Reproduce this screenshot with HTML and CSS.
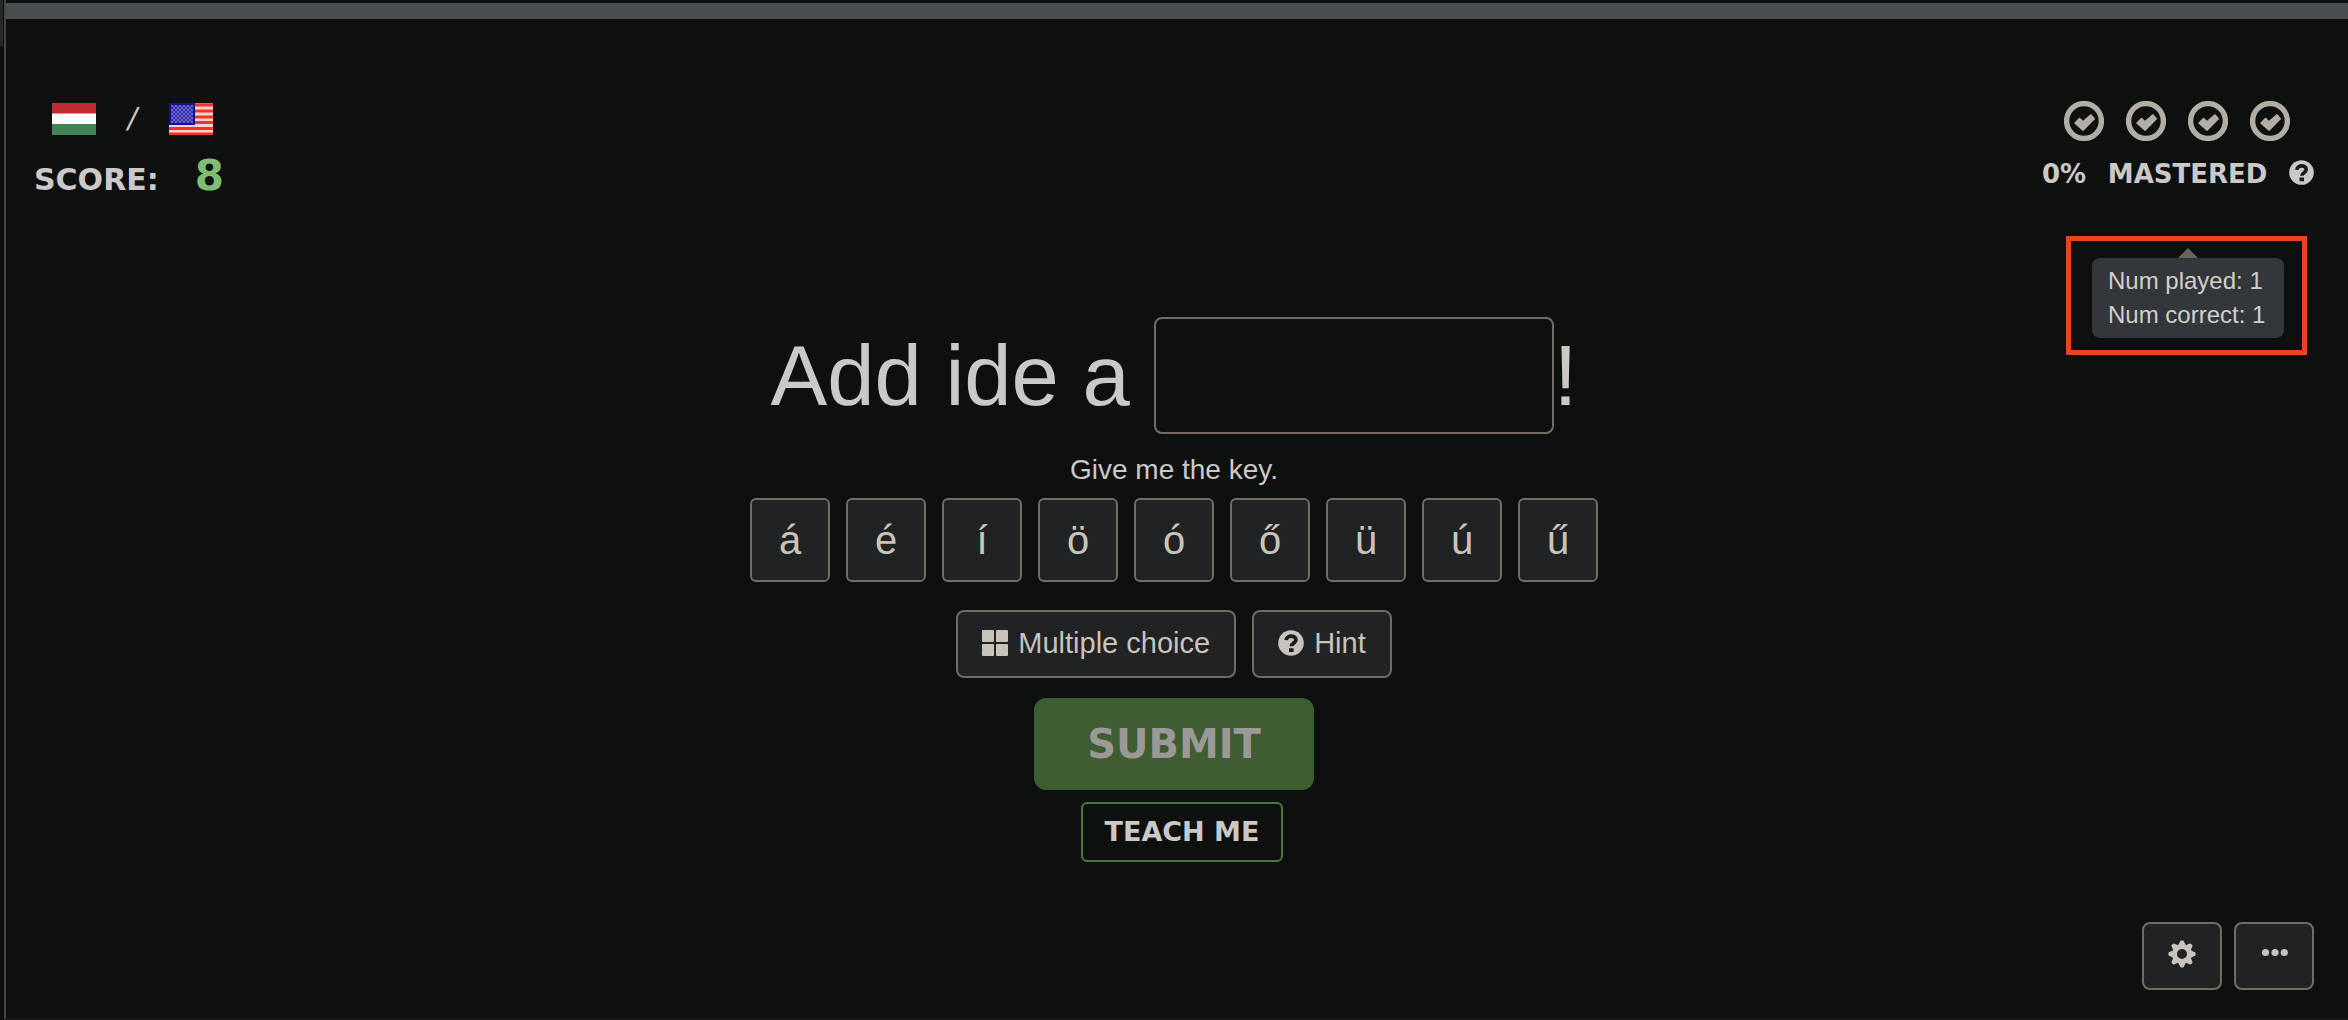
FILE: index.html
```html
<!DOCTYPE html>
<html lang="en">
<head>
<meta charset="utf-8">
<title>Fill in the blank</title>
<link rel="stylesheet" href="styles.css">
</head>
<body>
<svg class="sprites" aria-hidden="true">
  <symbol id="check" viewBox="0 0 40 40">
    <circle cx="20" cy="20" r="17.4" fill="none" stroke="currentColor" stroke-width="5.4"/>
    <path d="M10.5 21.5 15 17q.7-.4 1.4.2l2.6 2.6 7.2-6.3q.8-.5 1.4.1l3.2 3.6q.4.8-.2 1.4L19.8 29.6q-.8.6-1.5 0L10.4 22.5q-.3-.5.1-1Z" fill="currentColor"/>
  </symbol>
  <symbol id="question" viewBox="0 0 26 26">
    <circle cx="13" cy="13" r="12.8" fill="currentColor"/>
    <path d="M8.2 10.2C8.5 4.8 17.9 4.8 17.9 10c0 3.2-4.5 3.1-4.5 6.3M11 20.1h4.6" fill="none" stroke="#1a1b1c" stroke-width="3.8"/>
  </symbol>
</svg>
<div class="page">
  <div class="topbar"></div>
  <header class="header">
    <div class="status">
      <div class="languages">
        <svg class="flag" viewBox="0 0 44 32" role="img" aria-label="Hungarian">
          <path fill="#bd2c33" d="M0 0h44v11H0z"/><path fill="#fff" d="M0 10.500h44v11H0z"/><path fill="#3f8558" d="M0 21h44v11H0z"/>
        </svg>
        <span class="slash">/</span>
        <svg class="flag" viewBox="0 0 44 32" role="img" aria-label="English">
          <defs><pattern id="stars" width="4" height="4" patternUnits="userSpaceOnUse"><path fill="#6a68c4" d="M0 0h2v2H0zM2 2h2v2H2z"/></pattern></defs>
          <path fill="#fbd0cc" d="M0 0h44v32H0z"/>
          <path stroke="#ee3424" stroke-width="3.200" d="M0 1.800h44M0 8h44M0 14h44M0 19.500h44M0 25.500h44M0 31h44"/>
          <path fill="#170f9c" d="M0 0h26v22H0z"/><path fill="#3330a8" d="M2 2h22v18H2z"/><path fill="url(#stars)" d="M2 2h22v18H2z"/>
        </svg>
      </div>
      <div class="score"><span>SCORE:</span><strong class="points">8</strong></div>
    </div>
    <div class="progress">
      <div class="checks">
        <svg class="check"><use href="#check"/></svg>
        <svg class="check"><use href="#check"/></svg>
        <svg class="check"><use href="#check"/></svg>
        <svg class="check"><use href="#check"/></svg>
      </div>
      <div class="mastered"><span class="label">0%</span><span class="label">MASTERED</span><svg class="help"><use href="#question"/></svg></div>
      <div class="highlight">
        <div class="tooltip" role="tooltip">Num played: 1<br>Num correct: 1</div>
      </div>
    </div>
  </header>
  <main class="main">
    <div class="sentence"><label class="before" for="answer">Add ide a</label><input class="answer" id="answer" type="text" autocomplete="off"><span>!</span></div>
    <p class="translation">Give me the key.</p>
    <div class="keys">
      <button class="btn key" type="button">á</button>
      <button class="btn key" type="button">é</button>
      <button class="btn key" type="button">í</button>
      <button class="btn key" type="button">ö</button>
      <button class="btn key" type="button">ó</button>
      <button class="btn key" type="button">ő</button>
      <button class="btn key" type="button">ü</button>
      <button class="btn key" type="button">ú</button>
      <button class="btn key" type="button">ű</button>
    </div>
    <div class="aids">
      <button class="btn aid" type="button"><svg class="icon" viewBox="0 0 26 26" fill="currentColor"><rect width="12" height="12" rx="1"/><rect x="14" width="12" height="12" rx="1"/><rect y="14" width="12" height="12" rx="1"/><rect x="14" y="14" width="12" height="12" rx="1"/></svg>Multiple choice</button>
      <button class="btn aid" type="button"><svg class="icon"><use href="#question"/></svg>Hint</button>
    </div>
    <button class="submit" type="button">SUBMIT</button>
    <button class="teach" type="button">TEACH ME</button>
  </main>
  <footer class="footer">
    <button class="btn tool" type="button" aria-label="Settings">
      <svg class="gear" viewBox="-14 -14 28 28">
        <circle r="7.500" fill="none" stroke="currentColor" stroke-width="5"/>
        <g fill="currentColor">
          <path id="tooth" d="M-3.500-9-2-12.600q.3-1 1-1H1q.7 0 1 1L3.500-9Z"/>
          <use href="#tooth" transform="rotate(45)"/><use href="#tooth" transform="rotate(90)"/><use href="#tooth" transform="rotate(135)"/><use href="#tooth" transform="rotate(180)"/><use href="#tooth" transform="rotate(225)"/><use href="#tooth" transform="rotate(270)"/><use href="#tooth" transform="rotate(315)"/>
        </g>
      </svg>
    </button>
    <button class="btn tool" type="button" aria-label="More">
      <svg class="gear" viewBox="0 0 28 28" fill="currentColor"><circle cx="5.500" cy="12.500" r="3.600"/><circle cx="15" cy="12.500" r="3.600"/><circle cx="24.300" cy="12.500" r="3.600"/></svg>
    </button>
  </footer>
</div>
</body>
</html>
```
FILE: styles.css
```css
* {
  box-sizing: border-box;
}

body {
  margin: 0;
  background: #0e100f;
  color: #cbc9c8;
  font-family: "Liberation Sans", Arial, sans-serif;
  font-size: 28px;
  line-height: 36px;
}

button,
input {
  margin: 0;
  font: inherit;
}

svg {
  display: block;
}

.sprites {
  position: absolute;
  width: 0;
  height: 0;
}

.page {
  display: flex;
  flex-direction: column;
  min-height: 100vh;
  padding-top: 3px;
  margin-left: 4px;
  border-left: 2px solid #434444;
  border-bottom: 2px solid #18191b;
}

.page::before {
  content: "";
  position: absolute;
  left: 0;
  top: 0;
  width: 3px;
  height: 46px;
  background: #272828;
}

.topbar {
  height: 16px;
  background: #4a4e50;
}

.header {
  display: flex;
  justify-content: space-between;
  padding: 82px 34px 0 28px;
  font-family: "DejaVu Sans", Verdana, sans-serif;
  font-weight: bold;
}

.languages {
  display: flex;
  align-items: center;
  gap: 24px;
  height: 36px;
  padding-left: 18px;
}

.flag {
  width: 44px;
  height: 32px;
}

.slash {
  width: 25px;
  font-size: 28px;
  font-style: italic;
  font-weight: normal;
  text-align: center;
}

.score {
  display: flex;
  align-items: baseline;
  gap: 36px;
  margin-top: 18px;
  font-size: 30px;
  line-height: 42px;
}

.points {
  color: #7fbd73;
  font-size: 42px;
}

.progress {
  position: relative;
  width: 272px;
}

.checks {
  display: flex;
  justify-content: center;
  gap: 22px;
  padding-right: 2px;
  color: #b3aea5;
}

.check {
  width: 40px;
  height: 40px;
}

.mastered {
  display: flex;
  align-items: center;
  justify-content: space-between;
  margin-top: 11px;
  font-size: 26px;
}

.label {
  padding-top: 4px;
}

.help {
  width: 25px;
  height: 25px;
}

.highlight {
  position: absolute;
  top: 135px;
  right: 7px;
  width: 241px;
  padding: 17px 18px 12px 21px;
  border: 5px solid #ec4124;
}

.tooltip {
  position: relative;
  padding: 6px 16px;
  border-radius: 8px;
  background: #33363a;
  color: #d3d0cb;
  font: 24px/34px "Liberation Sans", Arial, sans-serif;
  white-space: nowrap;
}

.tooltip::before {
  content: "";
  position: absolute;
  bottom: 100%;
  left: 50%;
  margin-left: -10px;
  border: 10px solid transparent;
  border-top: 0;
  border-bottom-color: #6b655b;
}

.main {
  display: flex;
  flex-direction: column;
  align-items: center;
  padding: 116px 34px 48px 28px;
}

.sentence {
  display: flex;
  align-items: center;
  font-size: 85px;
  line-height: 117px;
}

.before {
  margin-right: 24px;
}

.answer {
  width: 400px;
  height: 117px;
  padding: 0 16px;
  border: 2px solid #736b5f;
  border-radius: 8px;
  background: transparent;
  color: inherit;
}

.translation {
  margin: 18px 0 10px;
}

.keys,
.aids {
  display: flex;
  gap: 16px;
}

.btn {
  display: flex;
  align-items: center;
  justify-content: center;
  border: 2px solid #736b5f;
  border-radius: 8px;
  background: #212224;
  color: #c8c4bc;
}

.key {
  width: 80px;
  height: 84px;
  padding: 0;
  border-radius: 6px;
  font-size: 40px;
}

.aids {
  margin-top: 28px;
}

.aid {
  gap: 10px;
  height: 68px;
  padding: 0 24px 2px;
  font-size: 29px;
}

.icon {
  width: 26px;
  height: 26px;
}

.submit,
.teach {
  font-family: "DejaVu Sans", Verdana, sans-serif;
  font-weight: bold;
}

.submit {
  width: 280px;
  height: 92px;
  margin-top: 20px;
  border: 2px solid #385d31;
  border-radius: 12px;
  background: #3f5c32;
  color: #9b9997;
  font-size: 40px;
}

.teach {
  height: 60px;
  margin: 12px 0 0 16px;
  padding: 0 22px;
  border: 2px solid #437b3b;
  border-radius: 6px;
  background: transparent;
  color: #cbc9c8;
  font-size: 27px;
}

.footer {
  display: flex;
  justify-content: flex-end;
  gap: 12px;
  margin-top: auto;
  padding: 0 34px 28px;
}

.tool {
  width: 80px;
  height: 68px;
  padding: 0 0 4px;
}

.gear {
  width: 28px;
  height: 28px;
}
```
